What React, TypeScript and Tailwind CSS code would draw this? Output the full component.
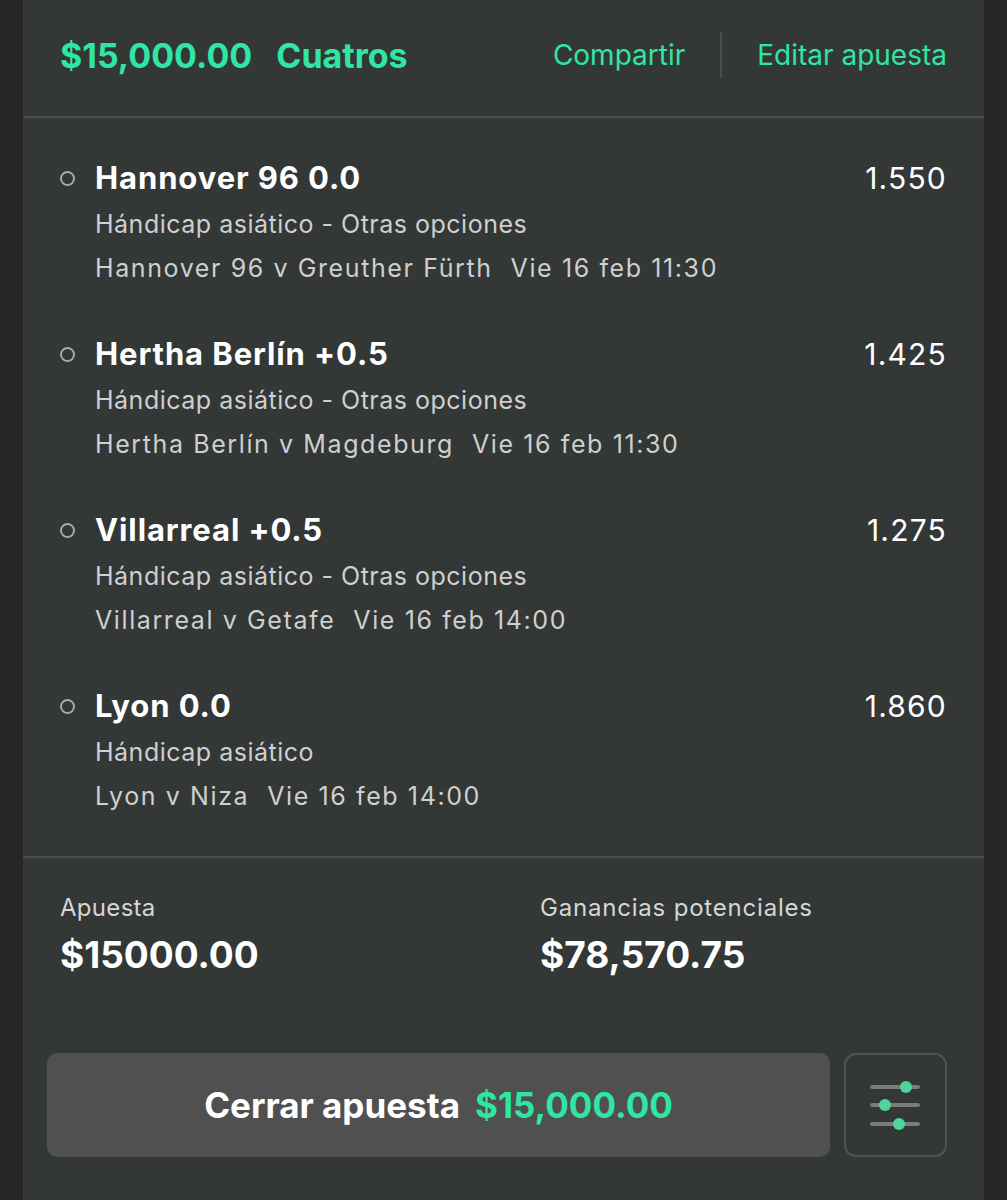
import React from 'react';

type Selection = {
  id: number;
  title: string;
  odds: string;
  market: string;
  match: string;
  date: string;
};

const selections: Selection[] = [
  { id: 1, title: 'Hannover 96 0.0', odds: '1.550', market: 'Hándicap asiático - Otras opciones', match: 'Hannover 96 v Greuther Fürth', date: 'Vie 16 feb 11:30' },
  { id: 2, title: 'Hertha Berlín +0.5', odds: '1.425', market: 'Hándicap asiático - Otras opciones', match: 'Hertha Berlín v Magdeburg', date: 'Vie 16 feb 11:30' },
  { id: 3, title: 'Villarreal +0.5', odds: '1.275', market: 'Hándicap asiático - Otras opciones', match: 'Villarreal v Getafe', date: 'Vie 16 feb 14:00' },
  { id: 4, title: 'Lyon 0.0', odds: '1.860', market: 'Hándicap asiático', match: 'Lyon v Niza', date: 'Vie 16 feb 14:00' },
];

function SlidersIcon() {
  return (
    <svg width="56" height="50" viewBox="0 0 56 50">
      <g stroke="#7b7b7b" strokeWidth="4" strokeLinecap="round">
        <line x1="4" y1="7" x2="50" y2="7" />
        <line x1="4" y1="25" x2="50" y2="25" />
        <line x1="4" y1="44" x2="50" y2="44" />
      </g>
      <circle cx="38" cy="7" r="6" fill="#4fd49b" />
      <circle cx="17" cy="25" r="6" fill="#4fd49b" />
      <circle cx="31" cy="44" r="6" fill="#4fd49b" />
    </svg>
  );
}

export default function App() {
  return (
    <div className="min-h-[1200px] w-[1007px] bg-[#262626] px-[23px]" style={{ fontFamily: 'Inter, "Noto Sans", sans-serif' }}>
      <div className="min-h-[1200px] bg-[#333736]">
        {/* Header */}
        <div className="flex h-[118px] items-center justify-between border-b-2 border-[#4a4f4e] pb-[6px] pl-[37px] pr-[37px]">
          <div className="flex items-center gap-[24px] text-[34px] font-bold text-[#2fe6a5]">
            <span>$15,000.00</span>
            <span>Cuatros</span>
          </div>
          <div className="flex items-center text-[28px] text-[#2fe6a5]">
            <span>Compartir</span>
            <span className="mx-[35px] h-[46px] w-[2px] bg-[#4a4f4e]" />
            <span>Editar apuesta</span>
          </div>
        </div>

        {/* Selections */}
        <div className="flex flex-col gap-[42px] border-b-2 border-[#4a4f4e] pb-[38px] pl-[37px] pr-[37px] pt-[38px]">
          {selections.map((s) => (
            <div key={s.id}>
              <div className="flex h-[44px] items-center">
                <span className="mr-[20px] h-[15px] w-[15px] rounded-full border-2 border-[#a9a9a9]" />
                <span className="flex-1 text-[31px] font-bold tracking-[0.9px] text-white">{s.title}</span>
                <span className="text-[30px] tracking-[1.2px] text-white">{s.odds}</span>
              </div>
              <div className="mt-[2px] pl-[35px] text-[25px] leading-[44px] text-[#cfcfcf]">
                <div className="tracking-[0.5px]">{s.market}</div>
                <div className="tracking-[1.6px]">
                  {s.match}
                  <span className="ml-[18px]">{s.date}</span>
                </div>
              </div>
            </div>
          ))}
        </div>

        {/* Summary */}
        <div className="flex pl-[37px] pr-[37px] pt-[35px]">
          <div className="w-[480px]">
            <div className="text-[24px] leading-[30px] tracking-[0.3px] text-[#d6d6d6]">Apuesta</div>
            <div className="mt-[12px] text-[37px] font-bold leading-[40px] text-white">$15000.00</div>
          </div>
          <div>
            <div className="text-[24px] leading-[30px] tracking-[0.8px] text-[#d6d6d6]">Ganancias potenciales</div>
            <div className="mt-[12px] text-[37px] font-bold leading-[40px] text-white">$78,570.75</div>
          </div>
        </div>

        {/* Actions */}
        <div className="mt-[78px] flex gap-[14px] pl-[24px] pr-[37px]">
          <button className="flex h-[104px] flex-1 items-center justify-center gap-[15px] rounded-[10px] bg-[#505050] text-[35px] font-bold">
            <span className="text-white">Cerrar apuesta</span>
            <span className="text-[#2fe6a5]">$15,000.00</span>
          </button>
          <button className="flex h-[104px] w-[103px] items-center justify-center rounded-[12px] border-2 border-[#525252]">
            <SlidersIcon />
          </button>
        </div>
      </div>
    </div>
  );
}
